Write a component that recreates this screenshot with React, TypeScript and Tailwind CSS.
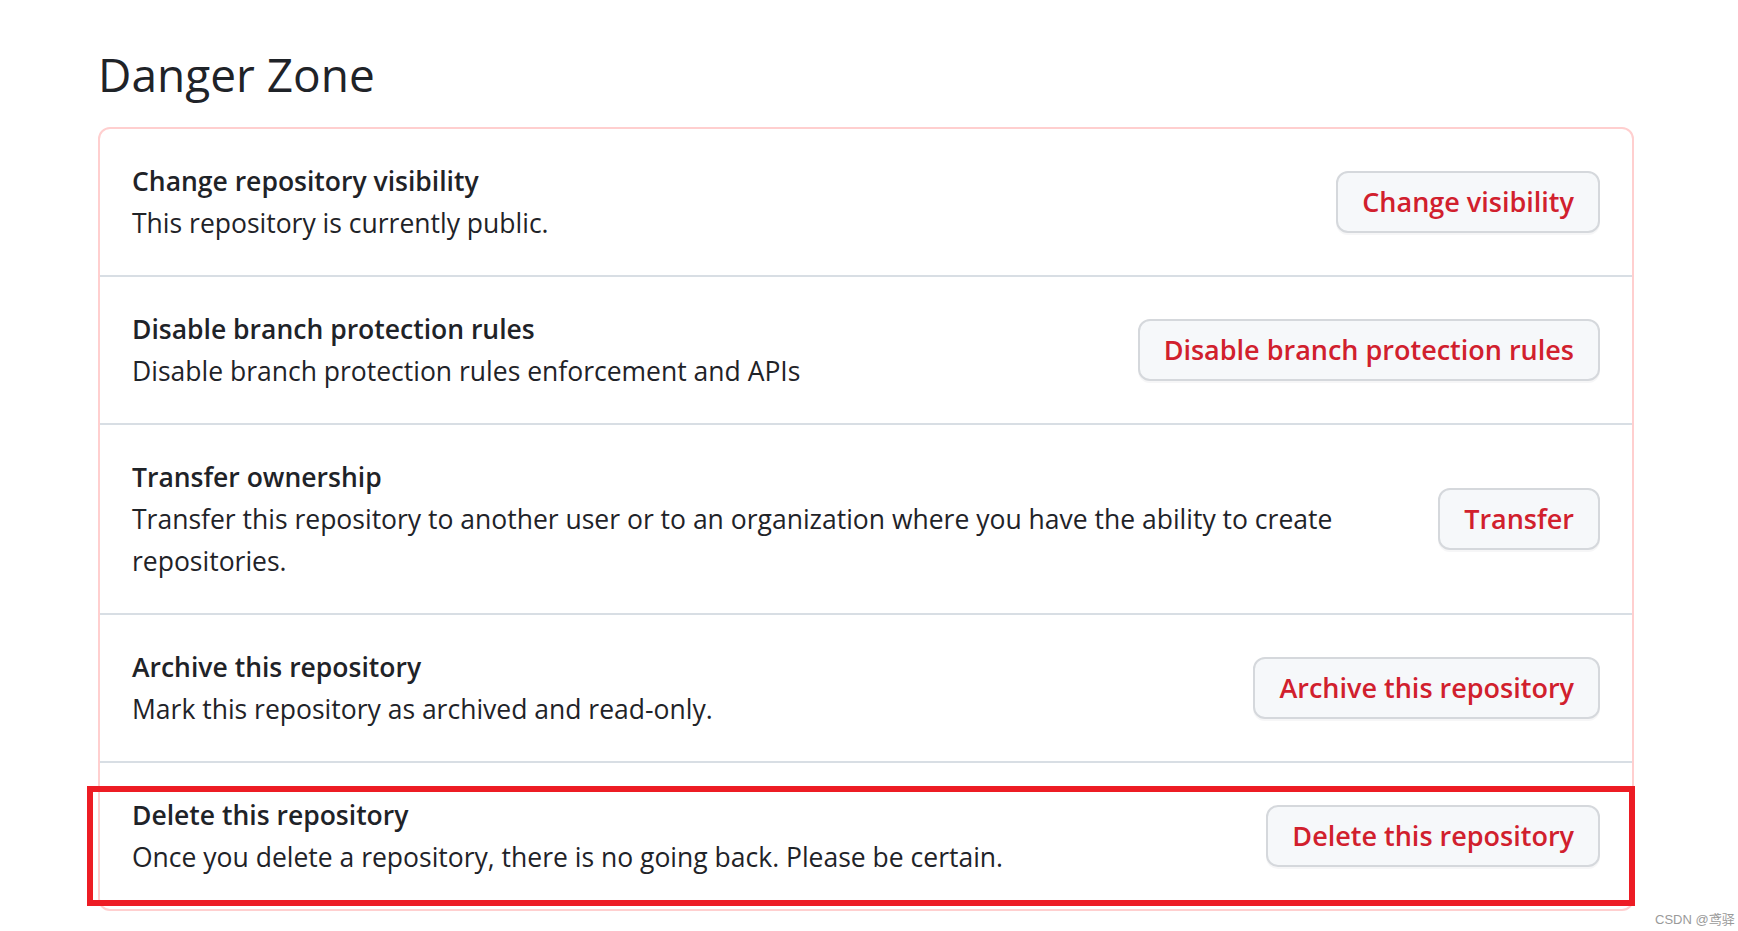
import React from "react";

type Row = {
  title: string;
  desc: string;
  action: string;
};

const rows: Row[] = [
  {
    title: "Change repository visibility",
    desc: "This repository is currently public.",
    action: "Change visibility",
  },
  {
    title: "Disable branch protection rules",
    desc: "Disable branch protection rules enforcement and APIs",
    action: "Disable branch protection rules",
  },
  {
    title: "Transfer ownership",
    desc: "Transfer this repository to another user or to an organization where you have the ability to create repositories.",
    action: "Transfer",
  },
  {
    title: "Archive this repository",
    desc: "Mark this repository as archived and read-only.",
    action: "Archive this repository",
  },
  {
    title: "Delete this repository",
    desc: "Once you delete a repository, there is no going back. Please be certain.",
    action: "Delete this repository",
  },
];

export default function App() {
  return (
    <div
      className="relative w-full min-h-screen bg-white text-[#1f2328]"
      style={{ fontFamily: '"Open Sans", "Noto Sans", sans-serif' }}
    >
      <div className="pl-[98px] pr-[104px] pt-[44px]">
        <h2 className="text-[46px] leading-[60px] font-normal mb-[23px]">Danger Zone</h2>
        <div className="rounded-[12px] border-2 border-[#ffcfcf] divide-y-2 divide-[#d8dee4]">
          {rows.map((row) => (
            <div key={row.title} className="flex items-center px-8 py-[31px]">
              <div className="flex-1 min-w-0 pr-[60px]">
                <div className="text-[26.5px] leading-[42px] font-semibold">{row.title}</div>
                <div className="text-[26.5px] leading-[42px]">{row.desc}</div>
              </div>
              <button className="shrink-0 h-[62px] px-[24px] rounded-[12px] border-2 border-[#d5d8dc] bg-[#f6f8fa] text-[#d1202d] text-[27px] font-semibold shadow-[0_2px_0_rgba(31,35,40,0.04)]">
                {row.action}
              </button>
            </div>
          ))}
        </div>
      </div>

      {/* annotation box over the last row */}
      <div className="absolute left-[87px] top-[786px] w-[1548px] h-[120px] border-[6px] border-[#ed1c24] pointer-events-none" />

      <div
        className="absolute left-[1655px] top-[910px] text-[13px] text-[#9a9a9a]"
        style={{ fontFamily: '"Liberation Sans", "Noto Sans CJK SC", sans-serif' }}
      >
        CSDN @鸢驿
      </div>
    </div>
  );
}
